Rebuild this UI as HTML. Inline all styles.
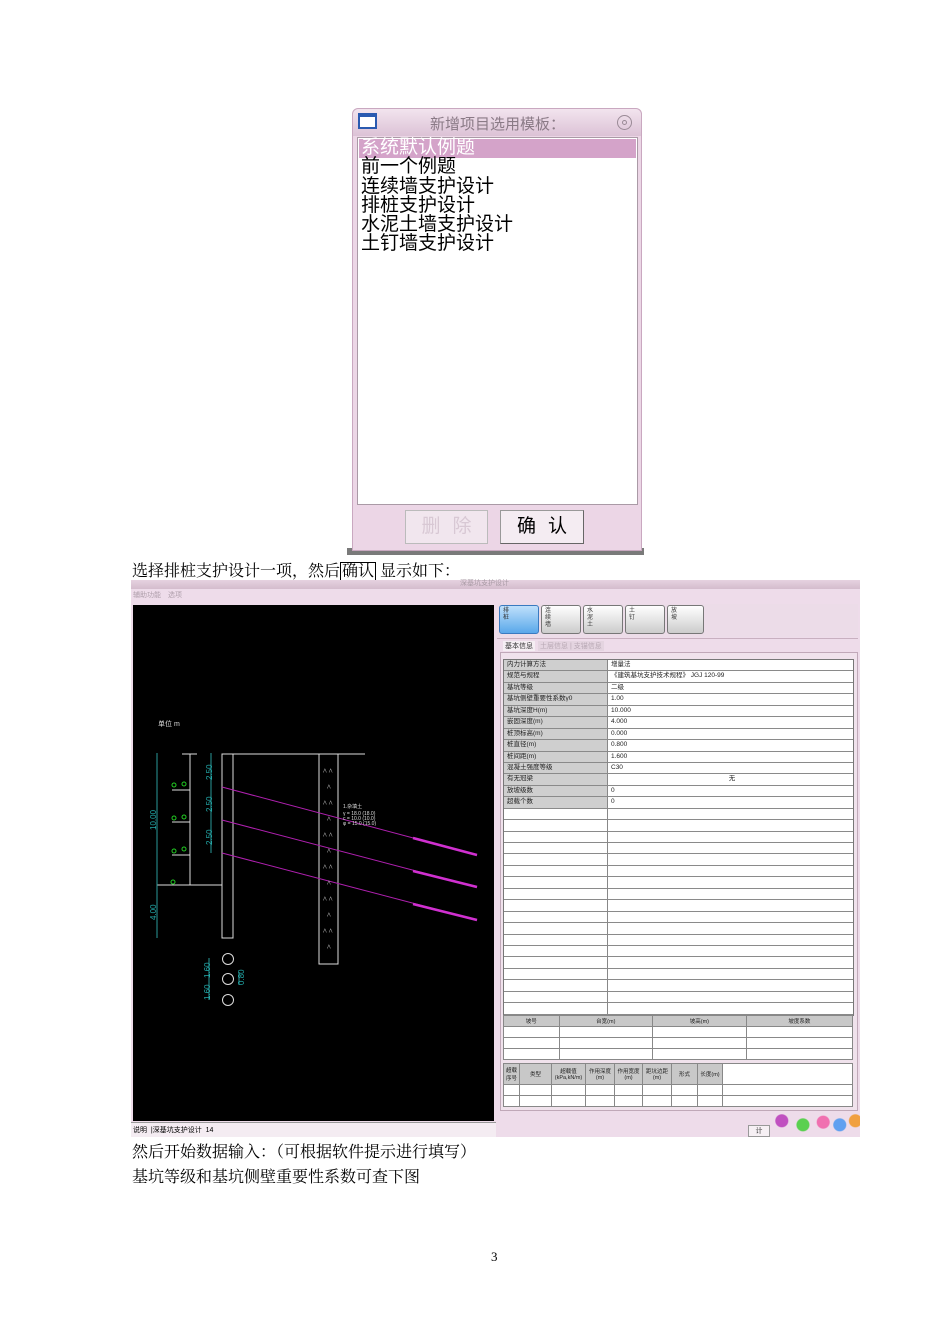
<!DOCTYPE html>
<html><head><meta charset="utf-8">
<style>
*{margin:0;padding:0;box-sizing:border-box}
body{width:950px;height:1344px;background:#fff;position:relative;overflow:hidden;font-family:"Liberation Serif","Noto Serif CJK SC",serif}
.a{position:absolute}
.cjk{font-family:"Liberation Sans","WenQuanYi Zen Hei","Noto Sans CJK SC",sans-serif}
.row{height:11.45px;border-bottom:1px solid #8a8a8a;display:flex;font-size:6.5px;line-height:10px;font-family:"Liberation Sans","Noto Sans CJK SC",sans-serif;color:#222}
.row .l{width:104px;border-right:1px solid #888;padding-left:3px;background:#cfcfcf}
.row .r{flex:1;padding-left:3px;background:#fff}
.e .l{background:#fff}
.tb{position:absolute;top:605px;height:29px;border:1px solid #777;border-radius:3px;background:linear-gradient(#fff,#ccc);font-size:6px;line-height:7px;padding:2px 3px;color:#333;font-family:"Liberation Sans","Noto Sans CJK SC",sans-serif}
.g td{border:1px solid #888;height:11px;font-size:5.5px;text-align:center;font-family:"Liberation Sans","Noto Sans CJK SC",sans-serif;color:#222;background:#fff}
</style></head><body>

<div class="a" style="left:347px;top:548px;width:297px;height:7px;background:#7a7a7a"></div>
<div class="a" style="left:352px;top:108px;width:290px;height:443px;background:#ecd6e6;border:1px solid #c9a8c0;border-radius:6px 6px 0 0"></div>
<div class="a" style="left:353px;top:109px;width:288px;height:27px;background:linear-gradient(#f2e4ee,#dcc2d6);border-radius:6px 6px 0 0"></div>
<div class="a" style="left:358px;top:113px;width:19px;height:16px;border:2px solid #2a5ab0;border-top-width:4px;background:#fff"></div>
<div class="a cjk" style="left:430px;top:113px;font-size:15px;color:#8a7a86">新增项目选用模板：</div>
<div class="a" style="left:617px;top:115px;width:15px;height:15px;border:1px solid #9a8a96;border-radius:50%"></div>
<div class="a" style="left:622px;top:120px;width:5px;height:5px;border:1px solid #9a8a96;border-radius:50%"></div>
<div class="a" style="left:357px;top:137px;width:281px;height:368px;background:#fff;border:1px solid #aa9aa6"></div>
<div class="a" style="left:359px;top:139px;width:277px;height:19px;background:#d4a3c9"></div>
<div class="a cjk" style="left:361px;top:138px;font-size:19px;line-height:19.3px;color:#000">
<div style="color:#fff">系统默认例题</div><div>前一个例题</div><div>连续墙支护设计</div><div>排桩支护设计</div><div>水泥土墙支护设计</div><div>土钉墙支护设计</div></div>
<div class="a cjk" style="left:405px;top:510px;width:83px;height:34px;border:1px solid #bbb;background:#f1e6ee;color:#d8c8d4;font-size:19px;text-align:center;line-height:32px;letter-spacing:12px;padding-left:12px">删除</div>
<div class="a cjk" style="left:500px;top:510px;width:84px;height:34px;border:1px solid #999;border-right-color:#666;border-bottom-color:#666;background:#f4ecf2;color:#000;font-size:19px;text-align:center;line-height:32px;letter-spacing:12px;padding-left:12px">确认</div>

<div class="a" style="left:132px;top:562px;font-size:16px;line-height:20px;color:#000">选择排桩支护设计一项，然后<span style="border:1px solid #000;padding:0 1px">确认</span> 显示如下：</div>

<div class="a" style="left:131px;top:580px;width:729px;height:557px;background:#eedcea"></div>
<div class="a" style="left:131px;top:580px;width:729px;height:9px;background:linear-gradient(#e6d2e0,#d4bccd)"></div>
<div class="a cjk" style="left:460px;top:578px;font-size:7px;color:#a89aa4">深基坑支护设计</div>
<div class="a cjk" style="left:133px;top:590px;font-size:7px;color:#b0a0ac">辅助功能　选项</div>
<div class="a" style="left:133px;top:605px;width:361px;height:516px;background:#000"></div>
<div class="a" style="left:131px;top:1122px;width:365px;height:15px;background:#f4ecf2;border-top:1px solid #999"></div>
<div class="a cjk" style="left:133px;top:1125px;font-size:7px;color:#000">说明 &nbsp;|深基坑支护设计 &nbsp;14</div>
<svg class="a" style="left:133px;top:605px" width="361" height="516" viewBox="133 605 361 516">
<g stroke="#ddd" fill="none" stroke-width="1">
<rect x="222" y="754" width="11" height="184"/>
<line x1="222" y1="754" x2="365" y2="754"/>
<rect x="319" y="754" width="19" height="210"/>
<line x1="157" y1="885" x2="222" y2="885"/>
<line x1="190" y1="754" x2="190" y2="885"/>
<line x1="182" y1="754" x2="197" y2="754"/>
<line x1="172" y1="790" x2="190" y2="790"/><line x1="172" y1="822" x2="190" y2="822"/><line x1="172" y1="855" x2="190" y2="855"/>
<circle cx="228" cy="959" r="5.5"/><circle cx="228" cy="979" r="5.5"/><circle cx="228" cy="1000" r="5.5"/>
</g>
<g stroke="#2a9a9a" stroke-width="1"><line x1="157" y1="753" x2="157" y2="938"/><line x1="211" y1="753" x2="211" y2="853"/><line x1="209" y1="958" x2="209" y2="1000"/><line x1="239" y1="972" x2="239" y2="985"/></g>
<g fill="#2aa" font-size="8" font-family="Liberation Sans">
<text transform="translate(156,830) rotate(-90)">10.00</text><text transform="translate(156,920) rotate(-90)">4.00</text>
<text transform="translate(212,780) rotate(-90)">2.50</text><text transform="translate(212,812) rotate(-90)">2.50</text><text transform="translate(212,845) rotate(-90)">2.50</text>
<text transform="translate(210,978) rotate(-90)">1.60</text><text transform="translate(210,1000) rotate(-90)">1.60</text><text transform="translate(244,985) rotate(-90)">0.80</text></g>
<g stroke="#b020b0" stroke-width="1"><line x1="222" y1="787" x2="477" y2="855"/><line x1="222" y1="820" x2="477" y2="887"/><line x1="222" y1="853" x2="477" y2="920"/></g>
<g stroke="#d030d0" stroke-width="2.5"><line x1="413" y1="838" x2="477" y2="855"/><line x1="413" y1="871" x2="477" y2="887"/><line x1="413" y1="904" x2="477" y2="920"/></g>
<g fill="#ddd" font-size="7" font-family="Liberation Sans,WenQuanYi Zen Hei"><text x="158" y="726">单位 m</text><text x="343" y="808" font-size="5">1.杂填土</text><text x="343" y="815" font-size="5">γ = 18.0 (18.0)</text><text x="343" y="820" font-size="5">c = 10.0 (10.0)</text><text x="343" y="825" font-size="5">φ = 15.0 (15.0)</text></g>
<g fill="#ddd" font-size="8"><text x="323" y="774">^ ^</text><text x="327" y="790">^</text><text x="323" y="806">^ ^</text><text x="327" y="822">^</text><text x="323" y="838">^ ^</text><text x="327" y="854">^</text><text x="323" y="870">^ ^</text><text x="327" y="886">^</text><text x="323" y="902">^ ^</text><text x="327" y="918">^</text><text x="323" y="934">^ ^</text><text x="327" y="950">^</text></g>
<g fill="none" stroke="#2c2" stroke-width="1"><circle cx="174" cy="785" r="2"/><circle cx="184" cy="784" r="2"/><circle cx="174" cy="818" r="2"/><circle cx="184" cy="817" r="2"/><circle cx="174" cy="851" r="2"/><circle cx="184" cy="849" r="2"/><circle cx="173" cy="882" r="2"/></g>
</svg>

<div class="a" style="left:497px;top:604px;width:361px;height:33px;background:#ecdce8"></div>
<div class="tb" style="left:499px;width:40px;background:linear-gradient(#bfe0fb,#5aa8ea);border-color:#3a7ac0">排<br>桩</div>
<div class="tb" style="left:541px;width:40px">连<br>续<br>墙</div>
<div class="tb" style="left:583px;width:40px">水<br>泥<br>土</div>
<div class="tb" style="left:625px;width:40px">土<br>钉</div>
<div class="tb" style="left:667px;width:37px">放<br>坡</div>
<div class="a" style="left:497px;top:638px;width:361px;height:1px;background:#c8b0c0"></div>
<div class="a cjk" style="left:503px;top:641px;font-size:7px;color:#333;background:#f5eef3;padding:0 2px">基本信息</div>
<div class="a cjk" style="left:538px;top:641px;font-size:7px;color:#b8a8b4;background:#e4d4e0;padding:0 2px">土层信息 | 支锚信息</div>
<div class="a" style="left:500px;top:652px;width:358px;height:459px;border:1px solid #c0a8b8;background:#f0e2ec"></div>
<div class="a" style="left:503px;top:659px;width:351px;border:1px solid #777;background:#fff">
<div class="row"><div class="l">内力计算方法</div><div class="r">增量法</div></div>
<div class="row"><div class="l">规范与规程</div><div class="r">《建筑基坑支护技术规程》 JGJ 120-99</div></div>
<div class="row"><div class="l">基坑等级</div><div class="r">二级</div></div>
<div class="row"><div class="l">基坑侧壁重要性系数γ0</div><div class="r">1.00</div></div>
<div class="row"><div class="l">基坑深度H(m)</div><div class="r">10.000</div></div>
<div class="row"><div class="l">嵌固深度(m)</div><div class="r">4.000</div></div>
<div class="row"><div class="l">桩顶标高(m)</div><div class="r">0.000</div></div>
<div class="row"><div class="l">桩直径(m)</div><div class="r">0.800</div></div>
<div class="row"><div class="l">桩间距(m)</div><div class="r">1.600</div></div>
<div class="row"><div class="l">混凝土强度等级</div><div class="r">C30</div></div>
<div class="row"><div class="l">有无冠梁</div><div class="r" style="text-align:center">无</div></div>
<div class="row"><div class="l">放坡级数</div><div class="r">0</div></div>
<div class="row"><div class="l">超载个数</div><div class="r">0</div></div>
<div class="row e"><div class="l"></div><div class="r"></div></div><div class="row e"><div class="l"></div><div class="r"></div></div><div class="row e"><div class="l"></div><div class="r"></div></div><div class="row e"><div class="l"></div><div class="r"></div></div><div class="row e"><div class="l"></div><div class="r"></div></div><div class="row e"><div class="l"></div><div class="r"></div></div><div class="row e"><div class="l"></div><div class="r"></div></div><div class="row e"><div class="l"></div><div class="r"></div></div><div class="row e"><div class="l"></div><div class="r"></div></div><div class="row e"><div class="l"></div><div class="r"></div></div><div class="row e"><div class="l"></div><div class="r"></div></div><div class="row e"><div class="l"></div><div class="r"></div></div><div class="row e"><div class="l"></div><div class="r"></div></div><div class="row e"><div class="l"></div><div class="r"></div></div><div class="row e"><div class="l"></div><div class="r"></div></div><div class="row e"><div class="l"></div><div class="r"></div></div><div class="row e"><div class="l"></div><div class="r"></div></div><div class="row e"><div class="l"></div><div class="r"></div></div>
</div>
<table class="a g" style="left:503px;top:1015px;width:350px;border-collapse:collapse">
<tr><td style="background:#c8c8c8">坡号</td><td style="background:#c8c8c8">台宽(m)</td><td style="background:#c8c8c8">坡高(m)</td><td style="background:#c8c8c8">坡度系数</td></tr>
<tr><td></td><td></td><td></td><td></td></tr><tr><td></td><td></td><td></td><td></td></tr><tr><td></td><td></td><td></td><td></td></tr></table>
<table class="a g" style="left:503px;top:1063px;width:350px;border-collapse:collapse">
<tr style="height:21px"><td style="background:#c8c8c8;width:16px">超载序号</td><td style="background:#c8c8c8;width:32px">类型</td><td style="background:#c8c8c8;width:34px">超载值(kPa,kN/m)</td><td style="background:#c8c8c8;width:29px">作用深度(m)</td><td style="background:#c8c8c8;width:28px">作用宽度(m)</td><td style="background:#c8c8c8;width:29px">距坑边距(m)</td><td style="background:#c8c8c8;width:26px">形式</td><td style="background:#c8c8c8;width:25px">长度(m)</td><td></td></tr>
<tr><td></td><td></td><td></td><td></td><td></td><td></td><td></td><td></td><td></td></tr><tr><td></td><td></td><td></td><td></td><td></td><td></td><td></td><td></td><td></td></tr></table>
<div class="a" style="left:748px;top:1125px;width:22px;height:12px;border:1px solid #999;background:#f6f0f4;font-size:7px;text-align:center">计</div>
<div class="a" style="left:768px;top:1110px;width:92px;height:27px;background:radial-gradient(circle at 15% 40%,#c050c0 0 6px,transparent 7px),radial-gradient(circle at 38% 55%,#5ad050 0 6px,transparent 7px),radial-gradient(circle at 60% 45%,#f070b0 0 6px,transparent 7px),radial-gradient(circle at 78% 55%,#60a0f0 0 6px,transparent 7px),radial-gradient(circle at 95% 40%,#f0a040 0 6px,transparent 7px)"></div>

<div class="a" style="left:132px;top:1143px;font-size:16px;line-height:20px">然后开始数据输入：（可根据软件提示进行填写）</div>
<div class="a" style="left:132px;top:1168px;font-size:16px;line-height:20px">基坑等级和基坑侧壁重要性系数可查下图</div>
<div class="a" style="left:491px;top:1249px;font-size:13px">3</div>
</body></html>
